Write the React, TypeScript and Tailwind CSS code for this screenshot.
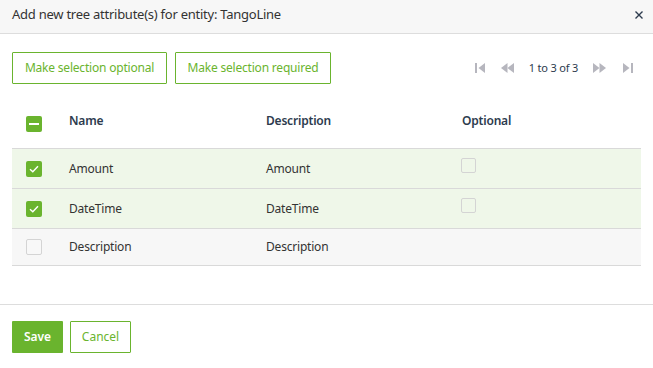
import React from 'react';

const rows = [
  { name: 'Amount', description: 'Amount', selected: true },
  { name: 'DateTime', description: 'DateTime', selected: true },
  { name: 'Description', description: 'Description', selected: false },
];

function Check({ state }: { state: 'on' | 'off' | 'mixed' }) {
  if (state === 'off') {
    return <div className="w-4 h-4 rounded-[2px] border border-[#d4d4d4] bg-[#f8f8f8]" />;
  }
  return (
    <div className="w-4 h-4 rounded-[2px] bg-[#6ab42e] flex items-center justify-center">
      {state === 'on' ? (
        <svg width="10" height="8" viewBox="0 0 10 8">
          <path d="M1 4.2 L3.8 6.8 L9 1.2" fill="none" stroke="white" strokeWidth="1.4" />
        </svg>
      ) : (
        <div className="w-[10px] h-[2px] bg-white" />
      )}
    </div>
  );
}

function Tri({ dir }: { dir: 'l' | 'r' }) {
  return (
    <path d={dir === 'l' ? 'M6.5 0 L0 5 L6.5 10 Z' : 'M0 0 L6.5 5 L0 10 Z'} />
  );
}

function PagerIcon({ kind }: { kind: 'first' | 'prev' | 'next' | 'last' }) {
  const w = kind === 'first' || kind === 'last' ? 10 : 13;
  return (
    <svg width={w} height="10" viewBox={`0 0 ${w} 10`} fill="#b6b6be">
      {kind === 'first' && (
        <g>
          <rect x="0" y="0" width="2" height="10" />
          <g transform="translate(3.5 0)"><Tri dir="l" /></g>
        </g>
      )}
      {kind === 'prev' && (
        <g>
          <Tri dir="l" />
          <g transform="translate(6.5 0)"><Tri dir="l" /></g>
        </g>
      )}
      {kind === 'next' && (
        <g>
          <Tri dir="r" />
          <g transform="translate(6.5 0)"><Tri dir="r" /></g>
        </g>
      )}
      {kind === 'last' && (
        <g>
          <Tri dir="r" />
          <rect x="8" y="0" width="2" height="10" />
        </g>
      )}
    </svg>
  );
}

export default function App() {
  return (
    <div
      className="w-[653px] h-[368px] bg-white text-[#333] flex flex-col overflow-hidden"
      style={{ fontFamily: '"Noto Sans", "Open Sans", sans-serif' }}
    >
      {/* Header */}
      <div className="h-[34px] bg-[#f7f7f7] border-b border-[#dddddd] flex items-center justify-between pl-3 pr-[10px] pb-[4px]">
        <span className="text-[13px] tracking-[-0.25px] text-[#333]">Add new tree attribute(s) for entity: TangoLine</span>
        <svg width="8" height="8" viewBox="0 0 8 8">
          <path d="M0.5 0.5 L7.5 7.5 M7.5 0.5 L0.5 7.5" stroke="#2d3b4e" strokeWidth="1.4" />
        </svg>
      </div>

      {/* Body */}
      <div className="flex-1 px-3 pt-[18px]">
        <div className="flex items-center justify-between">
          <div className="flex gap-2">
            <button className="h-[32px] w-[155px] border border-[#6ab42e] text-[#6ab42e] text-[12px] tracking-[-0.2px] rounded-[1px]">
              Make selection optional
            </button>
            <button className="h-[32px] w-[156px] border border-[#6ab42e] text-[#6ab42e] text-[12px] tracking-[-0.2px] rounded-[1px]">
              Make selection required
            </button>
          </div>
          <div className="flex items-center text-[11px] text-[#2d3b4e] pr-[8px]">
            <PagerIcon kind="first" />
            <span className="w-[16px]" />
            <PagerIcon kind="prev" />
            <span className="mx-[15px] tracking-[-0.2px]">1 to 3 of 3</span>
            <PagerIcon kind="next" />
            <span className="w-[17px]" />
            <PagerIcon kind="last" />
          </div>
        </div>

        {/* Table */}
        <div className="mt-[16px] text-[12px]">
          <div className="h-[49px] flex items-center border-b border-[#d9d9d9] font-semibold text-[#2d3b4e] tracking-[-0.2px]">
            <div className="w-[57px] pl-[14px]"><Check state="mixed" /></div>
            <div className="w-[197px] pb-[6px]">Name</div>
            <div className="w-[196px] pb-[6px]">Description</div>
            <div className="pb-[6px]">Optional</div>
          </div>
          {rows.map((r) => (
            <div
              key={r.name}
              className={`flex items-center border-b border-[#d9d9d9] tracking-[-0.2px] ${r.selected ? 'bg-[#eff7e9] h-[40px]' : 'bg-[#f7f7f7] h-[37px]'}`}
            >
              <div className="w-[57px] pl-[14px]"><Check state={r.selected ? 'on' : 'off'} /></div>
              <div className="w-[197px]">{r.name}</div>
              <div className="w-[195px]">{r.description}</div>
              <div className="pb-[6px]">
                {r.selected && <div className="w-[15px] h-[15px] rounded-[2px] border border-[#d4d4d4]" />}
              </div>
            </div>
          ))}
        </div>
      </div>

      {/* Footer */}
      <div className="border-t border-[#dddddd] h-[64px] px-3 pt-[16px] flex gap-[7px]">
        <button className="h-[32px] w-[51px] bg-[#6ab42e] text-white text-[12px] font-semibold rounded-[1px]">Save</button>
        <button className="h-[32px] w-[61px] border border-[#6ab42e] text-[#6ab42e] text-[12px] rounded-[1px]">Cancel</button>
      </div>
    </div>
  );
}
